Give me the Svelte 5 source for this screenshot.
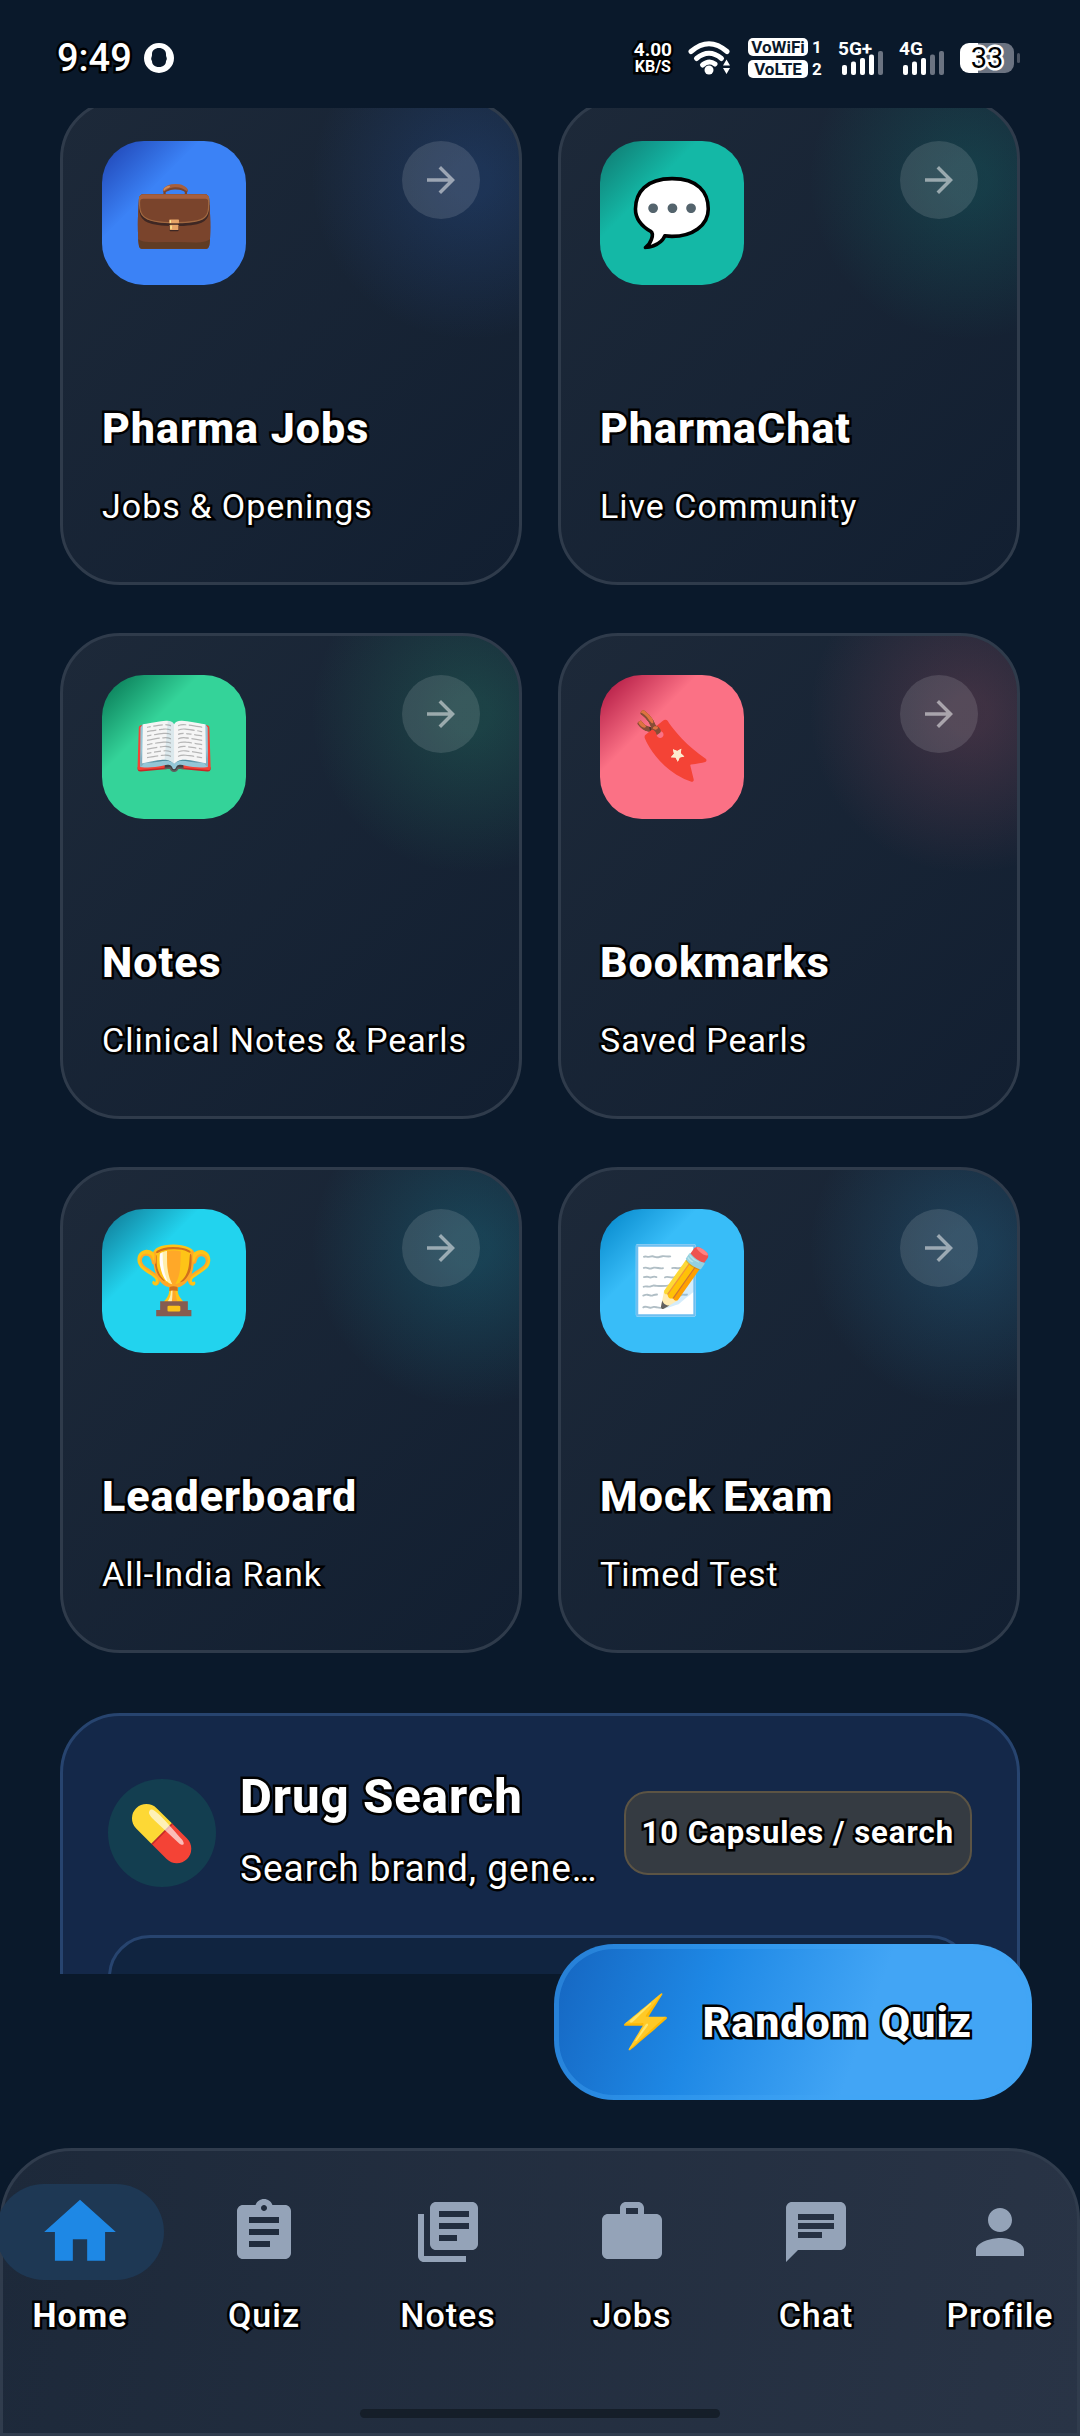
<!-- src/App.svelte -->
<script lang="ts">
  const tiles = [
    { title: 'Pharma Jobs', subtitle: 'Jobs & Openings', emoji: '💼', from: '#1e40af', to: '#3b82f6' },
    { title: 'PharmaChat', subtitle: 'Live Community', emoji: '💬', from: '#0f766e', to: '#14b8a6' },
    { title: 'Notes', subtitle: 'Clinical Notes & Pearls', emoji: '📖', from: '#04704f', to: '#34d399' },
    { title: 'Bookmarks', subtitle: 'Saved Pearls', emoji: '🔖', from: '#a80f3c', to: '#fb7185' },
    { title: 'Leaderboard', subtitle: 'All-India Rank', emoji: '🏆', from: '#0e7490', to: '#22d3ee' },
    { title: 'Mock Exam', subtitle: 'Timed Test', emoji: '📝', from: '#0284c7', to: '#38bdf8' },
  ];

  const tabs = [
    { label: 'Home', icon: 'M10 20v-6h4v6h5v-8h3L12 3 2 12h3v8z' },
    {
      label: 'Quiz',
      icon: 'M19 3h-4.18C14.4 1.84 13.3 1 12 1c-1.3 0-2.4.84-2.82 2H5c-1.1 0-2 .9-2 2v14c0 1.1.9 2 2 2h14c1.1 0 2-.9 2-2V5c0-1.1-.9-2-2-2zm-7 0c.55 0 1 .45 1 1s-.45 1-1 1-1-.45-1-1 .45-1 1-1zm2 14H7v-2h7v2zm3-4H7v-2h10v2zm0-4H7V7h10v2z',
    },
    {
      label: 'Notes',
      icon: 'M4 6H2v14c0 1.1.9 2 2 2h14v-2H4V6zm16-4H8c-1.1 0-2 .9-2 2v12c0 1.1.9 2 2 2h12c1.1 0 2-.9 2-2V4c0-1.1-.9-2-2-2zm-1 9H9V9h10v2zm-4 4H9v-2h6v2zm4-8H9V5h10v2z',
    },
    {
      label: 'Jobs',
      icon: 'M20 6h-4V4c0-1.11-.89-2-2-2h-4c-1.11 0-2 .89-2 2v2H4c-1.11 0-1.99.89-1.99 2L2 19c0 1.11.89 2 2 2h16c1.11 0 2-.89 2-2V8c0-1.11-.89-2-2-2zm-6 0h-4V4h4v2z',
    },
    {
      label: 'Chat',
      icon: 'M20 2H4c-1.1 0-1.99.9-1.99 2L2 22l4-4h14c1.1 0 2-.9 2-2V4c0-1.1-.9-2-2-2zM6 9h12v2H6V9zm8 5H6v-2h8v2zm4-6H6V6h12v2z',
    },
    {
      label: 'Profile',
      icon: 'M12 12c2.21 0 4-1.79 4-4s-1.79-4-4-4-4 1.79-4 4 1.79 4 4 4zm0 2c-2.67 0-8 1.34-8 4v2h16v-2c0-2.66-5.33-4-8-4z',
    },
  ];

  const networks = [
    { name: '5G+', level: 4 },
    { name: '4G', level: 3 },
  ];

  let active = $state('Home');
</script>

<div class="app">
  <header class="status">
    <div class="clock">
      <span class="time outlined">9:49</span>
      <svg class="notice" viewBox="0 0 30 30" aria-hidden="true">
        <path
          fill="#fff"
          fill-rule="evenodd"
          d="M15 0a15 15 0 1 0 0 30a15 15 0 1 0 0-30zM15 5c4 0 7 2.500 7 6c0 1.500 0 2 .6 3.500c.5 1.500 0 2.500-.6 3.500c0 3.500-2.500 6-7 6s-7-2.500-7-6c-.6-1-1.100-2-.6-3.500C8 13 8 12.500 8 11c0-3.500 3-6 7-6z"
        />
      </svg>
    </div>

    <div class="system">
      <div class="speed outlined">
        <span class="rate">4.00</span>
        <span>KB/S</span>
      </div>
      <svg class="wifi" viewBox="0 0 44 34" aria-hidden="true">
        <g fill="none" stroke="#fff" stroke-width="5" stroke-linecap="round">
          <path d="M3 10.500Q21 -5 39 10.500" />
          <path d="M8.500 17.500Q21 7 33.500 17.500" />
          <path d="M14.500 24Q21 18.500 27 23" />
        </g>
        <circle cx="21" cy="29" r="4.500" fill="#fff" />
        <path fill="#fff" d="M38.500 18.500l3.500 6h-7zM38.500 33l3.500-6h-7z" />
      </svg>
      <div class="sims">
        <span class="badge">VoWiFi</span><span>1</span>
        <span class="badge">VoLTE</span><span>2</span>
      </div>
      {#each networks as network}
        <div class="network">
          <span>{network.name}</span>
          <svg class="bars" viewBox="0 0 41 24" aria-hidden="true">
            {#each [0, 1, 2, 3, 4] as i}
              <rect
                x={i * 9}
                y={14 - i * 3.5}
                width="5"
                height={10 + i * 3.5}
                rx="2"
                fill={i < network.level ? '#fff' : '#6b7381'}
              />
            {/each}
          </svg>
        </div>
      {/each}
      <div class="battery"><span>33</span></div>
    </div>
  </header>

  <main class="content">
    <section class="grid">
      {#each tiles as tile}
        <a class="card" href="#top" style="--from: {tile.from}; --to: {tile.to}">
          <div class="card-top">
            <span class="tile-icon">{tile.emoji}</span>
            <span class="arrow">
              <svg viewBox="0 0 24 24" aria-hidden="true">
                <path d="M12 4l-1.410 1.410L16.170 11H4v2h12.170l-5.580 5.590L12 20l8-8z" />
              </svg>
            </span>
          </div>
          <div>
            <h2 class="outlined">{tile.title}</h2>
            <p class="outlined">{tile.subtitle}</p>
          </div>
        </a>
      {/each}
    </section>

    <section class="drug">
      <div class="drug-head">
        <span class="capsule">💊</span>
        <div class="drug-text">
          <h2 class="outlined">Drug Search</h2>
          <p class="outlined">Search brand, generic or salt</p>
        </div>
        <span class="cost outlined">10 Capsules / search</span>
      </div>
      <input class="drug-input" type="search" aria-label="Drug Search" />
    </section>
  </main>

  <div class="dock">
    <button class="fab" type="button">
      <span class="bolt">⚡</span>
      <span class="outlined">Random Quiz</span>
    </button>
  </div>

  <nav class="nav">
    <div class="tabs">
      {#each tabs as tab}
        <button class="tab" class:active={active === tab.label} type="button" onclick={() => (active = tab.label)}>
          <span class="indicator">
            <svg viewBox="0 0 24 24" aria-hidden="true"><path d={tab.icon} /></svg>
          </span>
          <span class="outlined">{tab.label}</span>
        </button>
      {/each}
    </div>
    <div class="handle"></div>
  </nav>
</div>

<style>
  :global(body) {
    background: #0a192b;
  }

  .app {
    height: 100vh;
    display: flex;
    flex-direction: column;
    overflow: hidden;
    background: #0a192b;
    color: #fff;
    font-family: Roboto, 'Noto Color Emoji', sans-serif;
    letter-spacing: 1px;
  }

  h2,
  p {
    margin: 0;
  }

  button {
    border: 0;
    padding: 0;
    background: none;
    color: inherit;
    font: inherit;
    letter-spacing: inherit;
  }

  .outlined {
    -webkit-text-stroke: 5px #000;
    paint-order: stroke fill;
    stroke-linejoin: round;
  }

  /* status bar */
  .status {
    flex: none;
    height: 108px;
    box-sizing: border-box;
    padding: 8px 60px 0 57px;
    display: flex;
    align-items: center;
    justify-content: space-between;
    letter-spacing: 0;
  }

  .clock,
  .system {
    display: flex;
    align-items: center;
  }

  .clock {
    gap: 12px;
  }

  .time {
    font-size: 38px;
    font-weight: 500;
  }

  .notice {
    width: 30px;
    height: 30px;
  }

  .system {
    gap: 16px;
  }

  .speed {
    display: flex;
    flex-direction: column;
    align-items: center;
    font-size: 16px;
    font-weight: 700;
    line-height: 17px;
  }

  .rate {
    font-size: 19px;
  }

  .wifi {
    width: 44px;
    height: 34px;
  }

  .sims {
    display: grid;
    grid-template-columns: 60px 10px;
    gap: 4px;
    align-items: center;
    font-size: 17px;
    font-weight: 700;
    line-height: 18px;
  }

  .badge {
    border-radius: 5px;
    background: #fff;
    color: #0a192b;
    text-align: center;
  }

  .network {
    display: flex;
    flex-direction: column;
    font-size: 19px;
    font-weight: 700;
    line-height: 16px;
  }

  .bars {
    align-self: flex-end;
    width: 41px;
    height: 24px;
    margin: -6px 0 0 4px;
  }

  .battery {
    position: relative;
    width: 54px;
    height: 30px;
    margin-right: 6px;
    border-radius: 9px;
    background: linear-gradient(90deg, #fff 33%, #6b7381 33%);
    display: flex;
    align-items: center;
    justify-content: center;
    color: #000;
    font-size: 29px;
    -webkit-text-stroke: 5px #fff;
    paint-order: stroke fill;
  }

  .battery::after {
    content: '';
    position: absolute;
    right: -6px;
    top: 10px;
    width: 3px;
    height: 10px;
    border-radius: 2px;
    background: #4a5362;
  }

  /* scrolled list */
  .content {
    flex: 1;
    min-height: 0;
    overflow: hidden;
    padding: 0 60px;
  }

  .grid {
    margin-top: -9px;
    display: grid;
    grid-template-columns: 1fr 1fr;
    gap: 48px 36px;
  }

  .card {
    box-sizing: border-box;
    height: 486px;
    padding: 39px 39px 46px;
    border: 3px solid #2f3b4b;
    border-radius: 60px;
    display: flex;
    flex-direction: column;
    justify-content: space-between;
    background:
      radial-gradient(
        circle 160px at calc(100% - 48px) 78px,
        color-mix(in srgb, var(--to) 17%, transparent) 12%,
        transparent
      ),
      linear-gradient(135deg, #1d2939, #121f31);
    color: inherit;
    text-decoration: none;
  }

  .card-top {
    display: flex;
    align-items: flex-start;
    justify-content: space-between;
  }

  .tile-icon {
    width: 144px;
    height: 144px;
    border-radius: 42px;
    display: flex;
    align-items: center;
    justify-content: center;
    background: linear-gradient(135deg, var(--from), var(--to) 34%);
    font-size: 66px;
    line-height: 72px;
    letter-spacing: 0;
  }

  .arrow {
    width: 78px;
    height: 78px;
    border-radius: 50%;
    display: flex;
    align-items: center;
    justify-content: center;
    background: rgba(255, 255, 255, 0.12);
  }

  .arrow svg {
    width: 42px;
    height: 42px;
    fill: rgba(255, 255, 255, 0.5);
  }

  .card h2 {
    font-size: 43px;
    font-weight: 800;
    line-height: 60px;
  }

  .card p {
    margin-top: 18px;
    font-size: 34px;
    line-height: 60px;
  }

  .drug {
    margin-top: 60px;
    padding: 45px;
    border: 3px solid #27446f;
    border-radius: 60px;
    background: #142849;
  }

  .drug-head {
    height: 144px;
    display: flex;
    align-items: center;
    gap: 24px;
  }

  .capsule {
    flex: none;
    width: 108px;
    height: 108px;
    border-radius: 50%;
    display: flex;
    align-items: center;
    justify-content: center;
    background: #133e50;
    font-size: 54px;
    letter-spacing: 0;
  }

  .drug-text {
    flex: 1;
    min-width: 0;
  }

  .drug h2 {
    font-size: 49px;
    font-weight: 800;
    line-height: 72px;
  }

  .drug p {
    font-size: 37px;
    line-height: 72px;
    overflow: hidden;
    text-overflow: ellipsis;
    white-space: nowrap;
  }

  .cost {
    flex: none;
    padding: 0 16px;
    border: 2px solid #5c5444;
    border-radius: 24px;
    background: #353b42;
    font-size: 31px;
    font-weight: 700;
    line-height: 80px;
  }

  .drug-input {
    display: block;
    box-sizing: border-box;
    width: 100%;
    height: 144px;
    margin-top: 30px;
    border: 3px solid #27446f;
    border-radius: 42px;
    background: #102440;
    color: inherit;
  }

  /* floating action */
  .dock {
    flex: none;
    height: 174px;
    position: relative;
  }

  .fab {
    position: absolute;
    right: 48px;
    bottom: 48px;
    width: 478px;
    height: 156px;
    border: 5px solid rgba(66, 165, 245, 0.4);
    border-radius: 60px;
    display: flex;
    align-items: center;
    justify-content: center;
    gap: 24px;
    background: linear-gradient(110deg, #1565c0, #1e88e5 32%, #42a5f5 64%) border-box;
    font-size: 43px;
    font-weight: 800;
    line-height: 60px;
  }

  .bolt {
    font-size: 51px;
  }

  /* bottom navigation */
  .nav {
    flex: none;
    box-sizing: border-box;
    height: 288px;
    border: 3px solid #303c4d;
    border-radius: 72px 72px 0 0;
    padding: 33px 0 15px;
    display: flex;
    flex-direction: column;
    align-items: center;
    justify-content: space-between;
    background: linear-gradient(100deg, #1d293a, #293446);
  }

  .tabs {
    align-self: stretch;
    display: flex;
    margin: 0 -15px;
  }

  .tab {
    flex: 1;
    display: flex;
    flex-direction: column;
    align-items: center;
    gap: 12px;
    font-size: 34px;
    font-weight: 500;
    line-height: 46px;
  }

  .indicator {
    width: 168px;
    height: 96px;
    border-radius: 48px;
    display: flex;
    align-items: center;
    justify-content: center;
  }

  .indicator svg {
    width: 72px;
    height: 72px;
    fill: #94a3b8;
  }

  .active {
    font-weight: 700;
  }

  .active .indicator {
    background: #1e3854;
  }

  .active .indicator svg {
    width: 86px;
    height: 86px;
    fill: #1e88e5;
  }

  .handle {
    width: 360px;
    height: 9px;
    border-radius: 5px;
    background: #151e29;
  }
</style>
